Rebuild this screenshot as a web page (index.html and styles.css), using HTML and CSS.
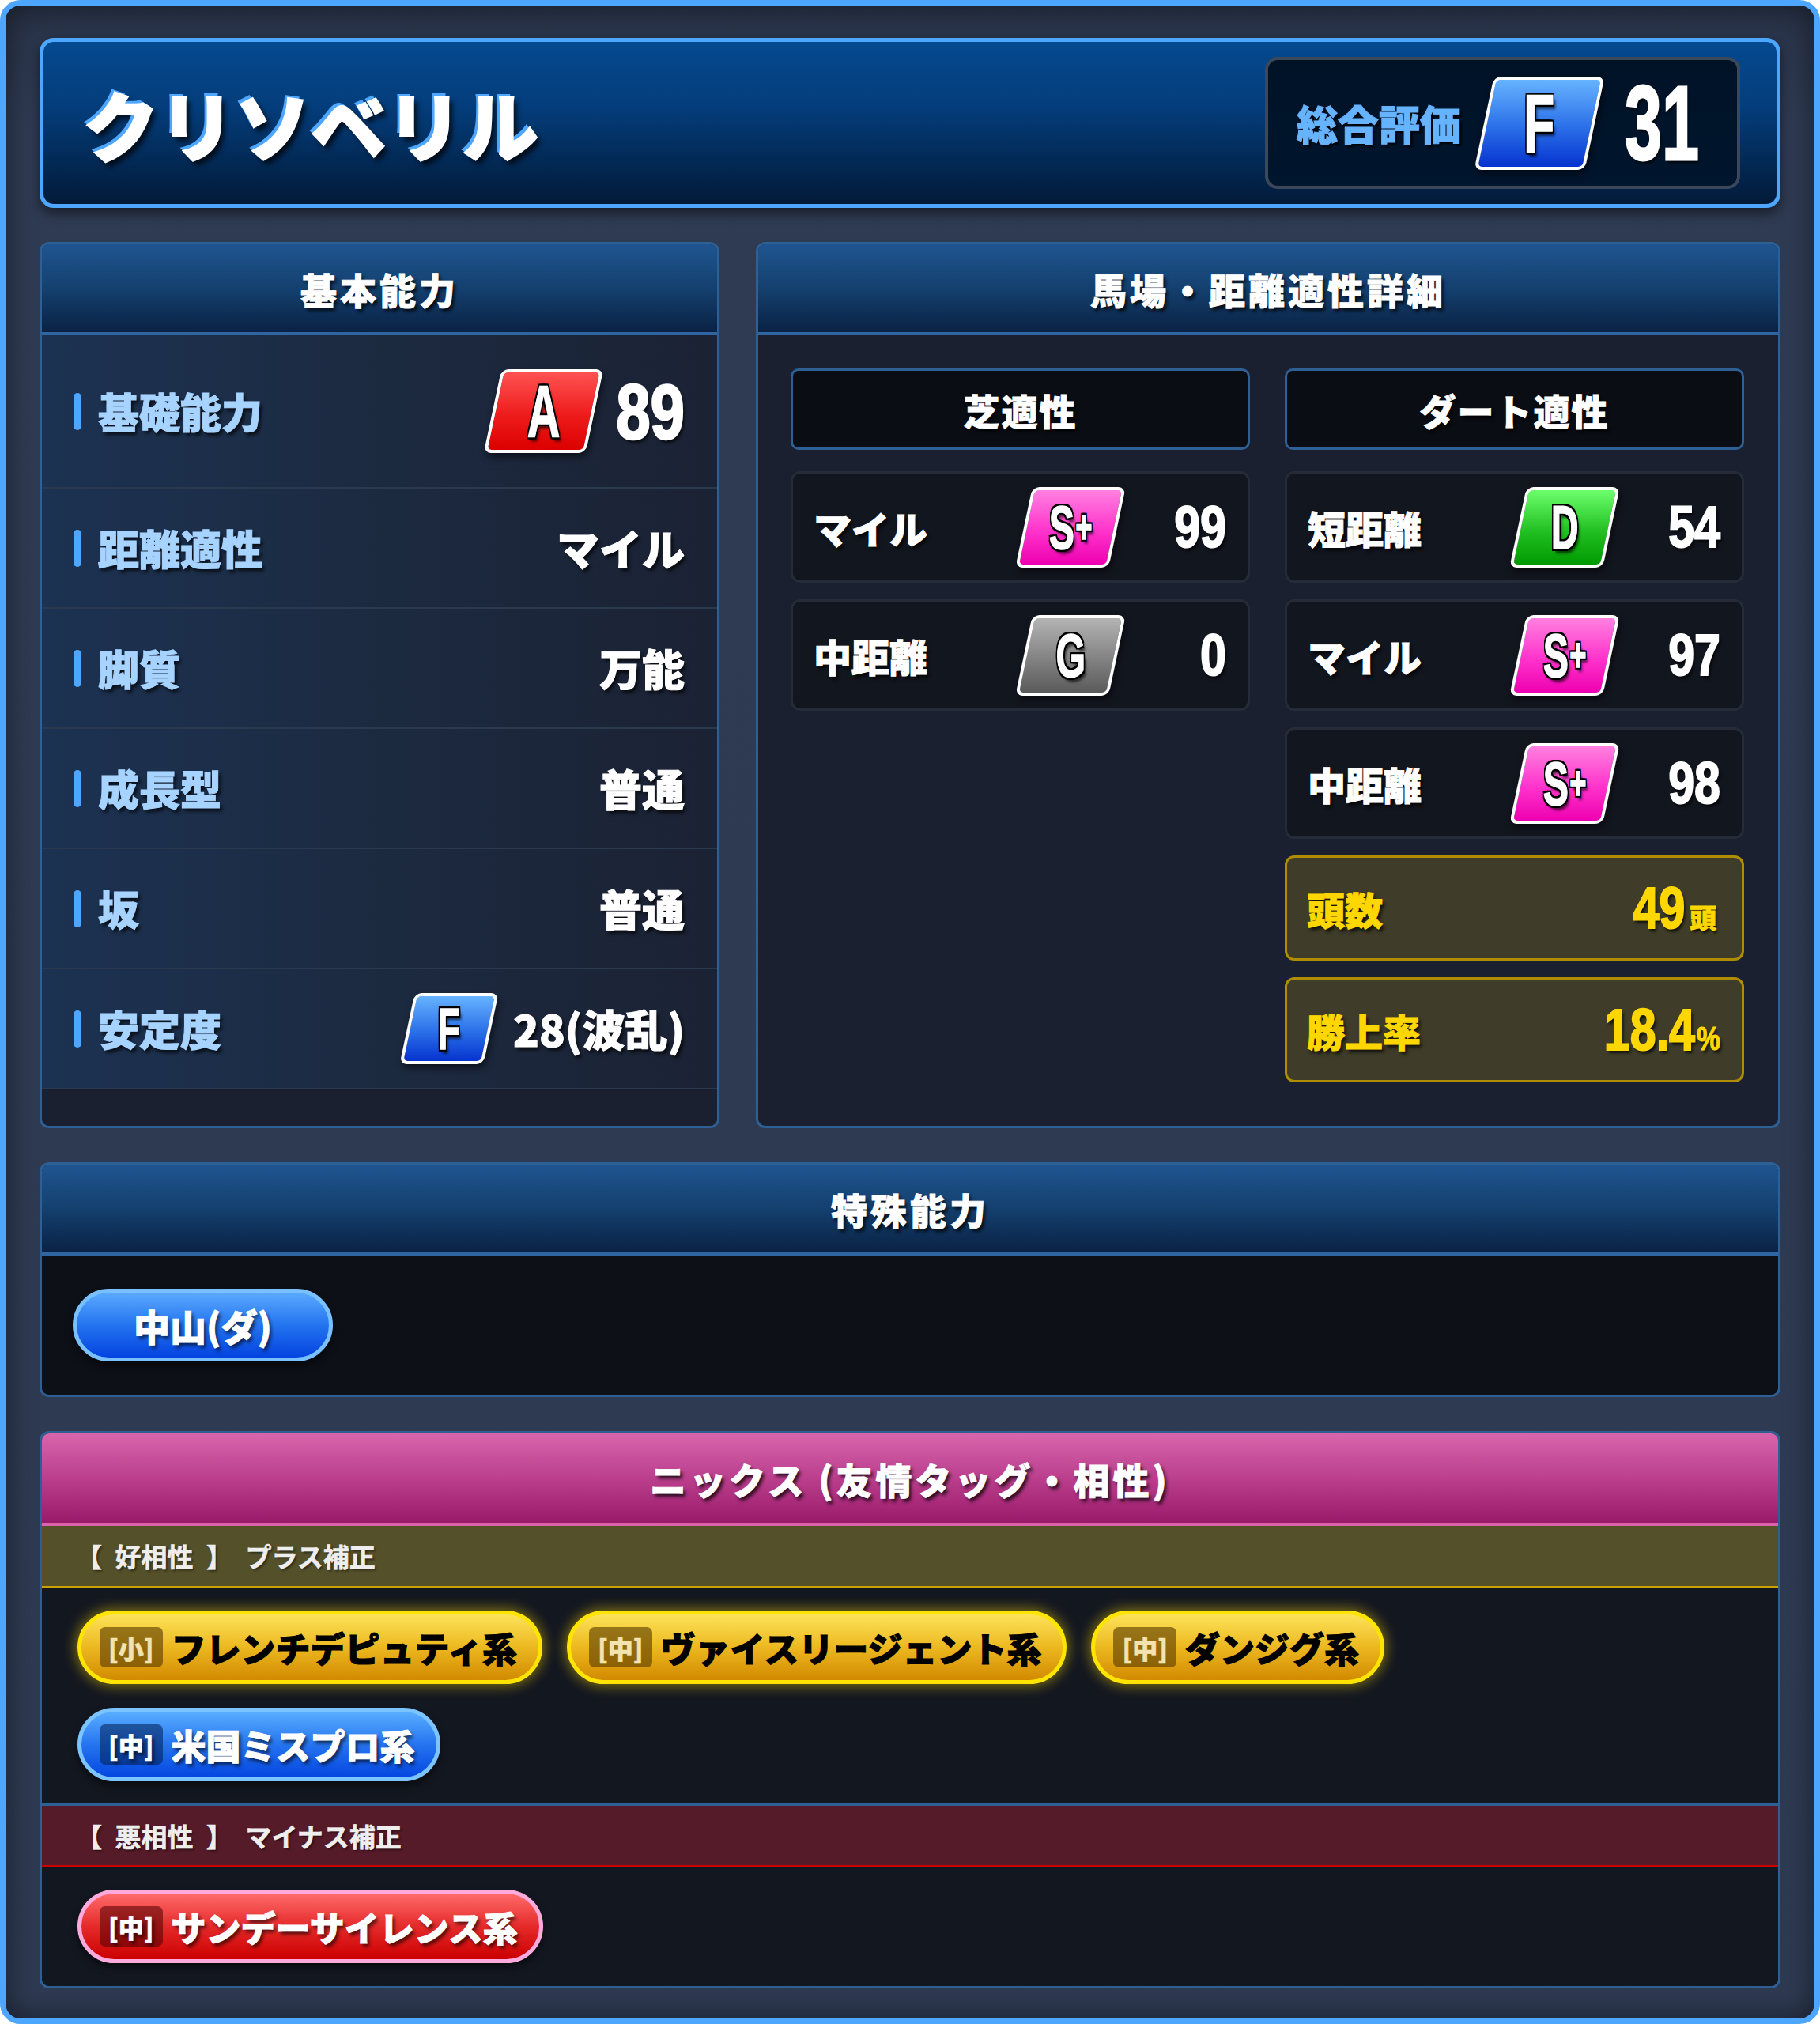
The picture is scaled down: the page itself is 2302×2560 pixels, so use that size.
FILE: index.html
```html
<!DOCTYPE html>
<html lang="ja">
<head>
<meta charset="utf-8">
<title>クリソベリル</title>
<link rel="stylesheet" href="styles.css">
</head>
<body>
<div class="frame">
  <header class="hero">
    <h1 class="hero-name">クリソベリル</h1>
    <div class="total">
      <span class="total-label">総合評価</span>
      <span class="badge b-blue b-hero"><span class="bl">F</span></span>
      <span class="num total-num">31</span>
    </div>
  </header>

  <div class="panels">
    <section class="panel basic">
      <h2 class="panel-head">基本能力</h2>
      <div class="brow first">
        <span class="blabel">基礎能力</span>
        <span class="bval"><span class="badge b-red b-big"><span class="bl">A</span></span><span class="num bnum">89</span></span>
      </div>
      <div class="brow">
        <span class="blabel">距離適性</span>
        <span class="bval">マイル</span>
      </div>
      <div class="brow">
        <span class="blabel">脚質</span>
        <span class="bval">万能</span>
      </div>
      <div class="brow">
        <span class="blabel">成長型</span>
        <span class="bval">普通</span>
      </div>
      <div class="brow">
        <span class="blabel">坂</span>
        <span class="bval">普通</span>
      </div>
      <div class="brow">
        <span class="blabel">安定度</span>
        <span class="bval"><span class="badge b-blue b-mid"><span class="bl">F</span></span><span class="stab">28(波乱)</span></span>
      </div>
      <div class="filler"></div>
    </section>

    <section class="panel course">
      <h2 class="panel-head">馬場・距離適性詳細</h2>
      <div class="course-body">
        <div class="col">
          <div class="col-head">芝適性</div>
          <div class="crow"><span class="clabel">マイル</span><span class="badge b-pink b-row"><span class="bl">S<span class="plus">+</span></span></span><span class="num cnum">99</span></div>
          <div class="crow"><span class="clabel">中距離</span><span class="badge b-gray b-row"><span class="bl">G</span></span><span class="num cnum">0</span></div>
        </div>
        <div class="col">
          <div class="col-head">ダート適性</div>
          <div class="crow"><span class="clabel">短距離</span><span class="badge b-green b-row"><span class="bl">D</span></span><span class="num cnum">54</span></div>
          <div class="crow"><span class="clabel">マイル</span><span class="badge b-pink b-row"><span class="bl">S<span class="plus">+</span></span></span><span class="num cnum">97</span></div>
          <div class="crow"><span class="clabel">中距離</span><span class="badge b-pink b-row"><span class="bl">S<span class="plus">+</span></span></span><span class="num cnum">98</span></div>
          <div class="ybox"><span class="ylabel">頭数</span><span class="yval"><span class="num ynum">49</span><span class="yunit">頭</span></span></div>
          <div class="ybox"><span class="ylabel">勝上率</span><span class="yval"><span class="num ynum">18.4</span><span class="num ypct">%</span></span></div>
        </div>
      </div>
    </section>
  </div>

  <section class="panel special">
    <h2 class="panel-head">特殊能力</h2>
    <div class="special-body">
      <span class="pill">中山(ダ)</span>
    </div>
  </section>

  <section class="panel nicks">
    <h2 class="panel-head nicks-head">ニックス (友情タッグ・相性)</h2>
    <div class="sub good">【 好相性 】 プラス補正</div>
    <div class="chips">
      <span class="chip c-yellow"><span class="tag">[小]</span>フレンチデピュティ系</span>
      <span class="chip c-yellow"><span class="tag">[中]</span>ヴァイスリージェント系</span>
      <span class="chip c-yellow"><span class="tag">[中]</span>ダンジグ系</span>
      <span class="chip c-blue"><span class="tag">[中]</span>米国ミスプロ系</span>
    </div>
    <div class="sub bad">【 悪相性 】 マイナス補正</div>
    <div class="chips last">
      <span class="chip c-red"><span class="tag">[中]</span>サンデーサイレンス系</span>
    </div>
  </section>
</div>
</body>
</html>
```

FILE: styles.css
```css
* { box-sizing: border-box; margin: 0; padding: 0; }

html, body { width: 2302px; height: 2560px; }

body {
  background: #ffffff;
  font-family: "Noto Sans CJK JP", "Noto Sans", sans-serif;
  font-weight: 900;
  color: #ffffff;
}

.frame {
  width: 2302px;
  height: 2560px;
  border: 7px solid #4da6ff;
  border-radius: 26px;
  background: linear-gradient(#283247, #2f3b53 6%, #2e3a52);
  box-shadow: inset 0 0 36px rgba(0, 0, 0, 0.5);
  padding: 41px 43px 0;
  display: flex;
  flex-direction: column;
  gap: 43px;
}

/* ---------- number / badge font ---------- */
.num {
  display: inline-block;
  font-family: "Liberation Sans", Arial, sans-serif;
  font-weight: 700;
  line-height: 1;
  white-space: nowrap;
  -webkit-text-stroke: 2px currentColor;
  text-shadow: 3px 4px 4px rgba(0, 0, 0, 0.7);
}

/* ---------- header ---------- */
.hero {
  flex: none;
  height: 215px;
  border: 5px solid #4da6ff;
  border-radius: 18px;
  background: linear-gradient(#05498f, #043d7b 40%, #021a38);
  box-shadow: 0 8px 14px rgba(0, 0, 0, 0.45);
  display: flex;
  align-items: center;
  justify-content: space-between;
  padding: 0 46px 0 50px;
}

.hero-name {
  font-size: 96px;
  font-weight: 900;
  line-height: 1;
  -webkit-text-stroke: 2px #ffffff;
  text-shadow: -4px -4px 0 #4da6ff, 5px 6px 6px rgba(0, 0, 0, 0.7);
}

.total {
  flex: none;
  width: 601px;
  height: 167px;
  background: linear-gradient(#001226, #00162e);
  border: 4px solid #3b4859;
  border-radius: 16px;
  display: flex;
  align-items: center;
  padding-left: 36px;
  white-space: nowrap;
}

.total-label {
  flex: none;
  font-size: 52px;
  color: #66b3ff;
  line-height: 1;
  -webkit-text-stroke: 1px #66b3ff;
  text-shadow: 3px 3px 3px rgba(0, 0, 0, 0.85);
}

.total .badge { margin-left: 29px; }

.total-num {
  flex: none;
  font-size: 134px;
  margin-left: 38px;
  -webkit-text-stroke: 3px #ffffff;
  transform: scaleX(0.63);
  transform-origin: left center;
}

/* ---------- badges ---------- */
.badge {
  flex: none;
  display: inline-flex;
  align-items: center;
  justify-content: center;
  border: 4px solid #ffffff;
  border-radius: 9px;
  transform: skewX(-12deg);
  box-shadow: 3px 5px 8px rgba(0, 0, 0, 0.55);
}

.bl {
  display: inline-block;
  font-family: "Liberation Sans", Arial, sans-serif;
  font-weight: 700;
  line-height: 1;
  color: #ffffff;
  white-space: nowrap;
  -webkit-text-stroke: 1.5px #ffffff;
  transform: skewX(12deg) scaleX(0.62);
  text-shadow:
    -3px -3px 0 #000, 3px -3px 0 #000, -3px 3px 0 #000, 3px 3px 0 #000,
    0 -3px 0 #000, 0 3px 0 #000, -3px 0 0 #000, 3px 0 0 #000,
    5px 6px 4px rgba(0, 0, 0, 0.6);
}

.plus { font-size: 0.75em; vertical-align: 0.12em; margin-left: 2px; }

.b-hero { width: 140px; height: 118px; }
.b-hero .bl { font-size: 104px; }
.b-big { width: 129px; height: 106px; }
.b-big .bl { font-size: 93px; }
.b-mid { width: 106px; height: 90px; }
.b-mid .bl { font-size: 75px; }
.b-row { width: 118px; height: 102px; }
.b-row .bl { font-size: 78px; }

.b-red { background: linear-gradient(#ff5252, #ee1c1c 55%, #dc0000); }
.b-blue { background: linear-gradient(#66b3ff, #2a6fe8 55%, #0633cf); }
.b-pink { background: linear-gradient(#ff80e0, #ff33cc 55%, #ee00b0); }
.b-green { background: linear-gradient(#6cff6c, #22c022 55%, #009a00); }
.b-gray { background: linear-gradient(#b4b4b4, #828282 55%, #5a5a5a); }

/* ---------- panels ---------- */
.panels {
  flex: none;
  display: grid;
  grid-template-columns: 860px 1fr;
  column-gap: 46px;
}

.panel {
  border: 3px solid #2e5f95;
  border-radius: 12px;
  background: #1b2030;
  overflow: hidden;
  display: flex;
  flex-direction: column;
}

.panel-head {
  flex: none;
  height: 115px;
  background: linear-gradient(#1f5590, #14406f 50%, #0a2244);
  border-bottom: 4px solid #2f66a2;
  display: flex;
  align-items: center;
  justify-content: center;
  font-size: 46px;
  font-weight: 900;
  letter-spacing: 4px;
  -webkit-text-stroke: 0.8px #ffffff;
  text-shadow: 3px 4px 4px rgba(0, 0, 0, 0.75);
}

/* basic */
.brow {
  flex: none;
  height: 152px;
  display: flex;
  align-items: center;
  justify-content: space-between;
  padding: 0 41px 0 40px;
  border-bottom: 2px solid #2b394e;
  background: linear-gradient(90deg, #1c3252, #1c2a40 50%, #1b2234);
}

.brow.first { height: 194px; }

.blabel {
  display: flex;
  align-items: center;
  gap: 21px;
  font-size: 52px;
  line-height: 1;
  color: #a6d3ff;
  -webkit-text-stroke: 1px #a6d3ff;
  text-shadow: 3px 4px 4px rgba(0, 0, 0, 0.7);
}

.blabel::before {
  content: "";
  width: 10px;
  height: 47px;
  border-radius: 5px;
  background: #4da6ff;
}

.bval {
  display: flex;
  align-items: center;
  font-size: 54px;
  line-height: 1;
  white-space: nowrap;
  -webkit-text-stroke: 1px #ffffff;
  text-shadow: 3px 4px 4px rgba(0, 0, 0, 0.7);
}

.bnum {
  font-size: 99px;
  margin-left: 4px;
  -webkit-text-stroke: 2.5px #ffffff;
  transform: scaleX(0.79);
  transform-origin: right center;
}

.stab { margin-left: 28px; }

.filler { flex: 1; background: #1b2030; }

/* course */
.course-body {
  padding: 42px 43px 55px 41px;
  display: grid;
  grid-template-columns: 1fr 1fr;
  column-gap: 44px;
  align-items: start;
}

.col {
  display: flex;
  flex-direction: column;
  gap: 21px;
}

.col-head {
  height: 103px;
  margin-bottom: 6px;
  background: #0a0d13;
  border: 3px solid #2e5f95;
  border-radius: 10px;
  display: flex;
  align-items: center;
  justify-content: center;
  font-size: 46px;
  letter-spacing: 2px;
  -webkit-text-stroke: 0.8px #ffffff;
  text-shadow: 3px 4px 4px rgba(0, 0, 0, 0.75);
}

.crow {
  height: 141px;
  background: #12161f;
  border: 3px solid #262c37;
  border-radius: 12px;
  display: flex;
  align-items: center;
  padding: 0 27px 0 26px;
}

.clabel {
  flex: 1;
  font-size: 48px;
  line-height: 1;
  -webkit-text-stroke: 1px #ffffff;
  text-shadow: 3px 4px 4px rgba(0, 0, 0, 0.7);
}

.cnum {
  width: 138px;
  text-align: right;
  font-size: 74px;
  transform: scaleX(0.8);
  transform-origin: right center;
}

.ybox {
  height: 133px;
  background: #3f3d29;
  border: 3px solid #b08c00;
  border-radius: 12px;
  display: flex;
  align-items: center;
  justify-content: space-between;
  padding: 0 20px 0 25px;
  color: #ffd700;
}

.ylabel {
  font-size: 48px;
  line-height: 1;
  -webkit-text-stroke: 1px #ffd700;
  text-shadow: 3px 4px 4px rgba(0, 0, 0, 0.7);
}

.yval { display: flex; align-items: baseline; }

.ynum {
  font-size: 74px;
  transform: scaleX(0.8);
  transform-origin: right center;
}

.yunit {
  font-size: 34px;
  margin-left: 6px;
  margin-right: 12px;
  -webkit-text-stroke: 0.8px #ffd700;
  text-shadow: 2px 3px 3px rgba(0, 0, 0, 0.7);
}

.ypct {
  font-size: 42px;
  margin-left: 2px;
  -webkit-text-stroke: 1px #ffd700;
  transform: scaleX(0.8);
  transform-origin: left center;
}

/* special */
.special { flex: none; }

.special-body {
  background: #0d1017;
  padding: 42px 39px;
  display: flex;
}

.pill {
  display: inline-flex;
  align-items: center;
  height: 92px;
  padding: 0 72px;
  border-radius: 46px;
  border: 5px solid #78c0ff;
  background: linear-gradient(#5aa9ff, #2474f0 50%, #0443e0);
  font-size: 46px;
  line-height: 1;
  -webkit-text-stroke: 1px #ffffff;
  text-shadow: 3px 4px 4px rgba(0, 0, 0, 0.6);
  box-shadow: 0 6px 10px rgba(0, 0, 0, 0.5);
}

/* nicks */
.nicks { flex: none; background: #131720; }

.nicks-head {
  height: 117px;
  background: linear-gradient(#d865ac, #bb3f8d 50%, #9a1a6a);
  border-bottom: 4px solid #dc63aa;
}

.sub {
  height: 79px;
  display: flex;
  align-items: center;
  padding-left: 43px;
  font-size: 33px;
  font-weight: 700;
  color: #eeeeee;
  white-space: pre;
  word-spacing: 9px;
  -webkit-text-stroke: 0.6px #eeeeee;
  text-shadow: 2px 2px 3px rgba(0, 0, 0, 0.5);
}

.sub.good { background: #54502a; border-bottom: 3px solid #c9a200; }

.sub.bad {
  height: 81px;
  background: #561b28;
  border-top: 3px solid #2e5f95;
  border-bottom: 3px solid #cc0000;
}

.chips {
  background: #131720;
  padding: 28px 45px 28px;
  display: flex;
  flex-wrap: wrap;
  gap: 30px 31px;
}

.chips.last { padding-bottom: 29px; }

.chip {
  height: 93px;
  display: inline-flex;
  align-items: center;
  border-radius: 47px;
  border: 5px solid;
  padding: 0 27px 0 23px;
  font-size: 44px;
  line-height: 1;
  white-space: nowrap;
}

.tag {
  height: 51px;
  display: inline-flex;
  align-items: center;
  padding: 0 11px;
  margin-right: 11px;
  border-radius: 7px;
  font-size: 32px;
  font-weight: 900;
}

.c-yellow {
  border-color: #ffe400;
  background: linear-gradient(#fde35a, #ecb820 50%, #d28a00);
  color: #000000;
  -webkit-text-stroke: 1px #000000;
  box-shadow: 0 0 16px 3px rgba(255, 215, 0, 0.45);
}
.c-yellow .tag { background: rgba(90, 60, 0, 0.62); color: #f3e3b0; -webkit-text-stroke: 0.6px #f3e3b0; }

.c-blue {
  border-color: #7cc4ff;
  background: linear-gradient(#5aaeff, #2674f0 50%, #0446e0);
  color: #ffffff;
  -webkit-text-stroke: 1px #ffffff;
  text-shadow: 3px 4px 4px rgba(0, 0, 0, 0.6);
  box-shadow: 0 6px 10px rgba(0, 0, 0, 0.5);
}
.c-blue .tag { background: rgba(0, 30, 80, 0.55); color: #ffffff; -webkit-text-stroke: 0.6px #ffffff; }

.c-red {
  border-color: #ffaadd;
  background: linear-gradient(#ff6b6b, #e52a2a 50%, #cc0000);
  color: #ffffff;
  -webkit-text-stroke: 1px #ffffff;
  text-shadow: 3px 4px 4px rgba(0, 0, 0, 0.6);
  box-shadow: 0 6px 10px rgba(0, 0, 0, 0.5);
}
.c-red .tag { background: rgba(80, 0, 0, 0.55); color: #ffffff; -webkit-text-stroke: 0.6px #ffffff; }
```
